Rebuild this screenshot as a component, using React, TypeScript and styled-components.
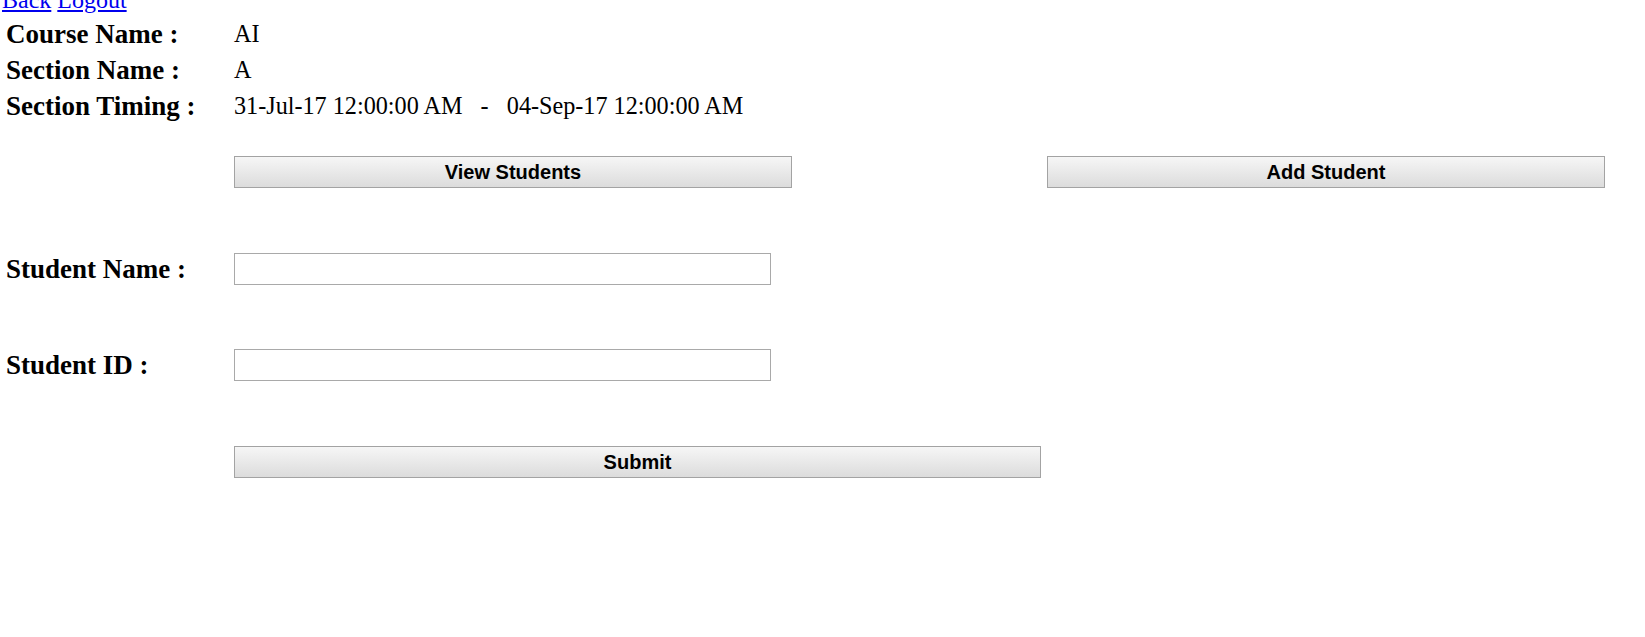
import React from "react";
import styled, { createGlobalStyle } from "styled-components";

const GlobalStyle = createGlobalStyle`
  html, body {
    margin: 0;
    padding: 0;
    background: #ffffff;
    overflow: hidden;
  }
  body {
    font-family: "Liberation Serif", "Times New Roman", serif;
    color: #000000;
  }
`;

const info = [
  { label: "Course Name :", value: "AI" },
  { label: "Section Name :", value: "A" },
  {
    label: "Section Timing :",
    value: "31-Jul-17 12:00:00 AM\u00a0\u00a0\u00a0-\u00a0\u00a0\u00a004-Sep-17 12:00:00 AM",
  },
];

const App: React.FC = () => {
  return (
    <Page>
      <GlobalStyle />
      <Nav>
        <NavLink href="#">Back</NavLink> <NavLink href="#">Logout</NavLink>
      </Nav>

      <InfoTable>
        {info.map((row) => (
          <InfoRow key={row.label}>
            <Label>{row.label}</Label>
            <Value>{row.value}</Value>
          </InfoRow>
        ))}
      </InfoTable>

      <FormRow $top={32} $height={32}>
        <span />
        <ButtonPair>
          <Button $width={558}>View Students</Button>
          <Button $width={558}>Add Student</Button>
        </ButtonPair>
      </FormRow>

      <FormRow $top={65} $height={32}>
        <Label>Student Name :</Label>
        <Input type="text" />
      </FormRow>

      <FormRow $top={64} $height={32}>
        <Label>Student ID :</Label>
        <Input type="text" />
      </FormRow>

      <FormRow $top={65} $height={32}>
        <span />
        <Button $width={807}>Submit</Button>
      </FormRow>
    </Page>
  );
};

export default App;

const Page = styled.div`
  width: 100%;
  display: flex;
  flex-direction: column;
`;

const Nav = styled.div`
  margin-top: -14px;
  padding-left: 2px;
  height: 30px;
  font-size: 24px;
  line-height: 28px;
  white-space: pre;
`;

const NavLink = styled.a`
  color: #0000ee;
  text-decoration: underline;
`;

const InfoTable = styled.div`
  display: flex;
  flex-direction: column;
`;

const InfoRow = styled.div`
  display: grid;
  grid-template-columns: 228px 1fr;
  align-items: center;
  height: 36px;
  padding-left: 6px;
`;

const Label = styled.div`
  font-size: 27px;
  font-weight: bold;
  white-space: nowrap;
`;

const Value = styled.div`
  font-size: 24.2px;
  white-space: nowrap;
`;

const FormRow = styled.div<{ $top: number; $height: number }>`
  display: grid;
  grid-template-columns: 228px 1fr;
  align-items: center;
  margin-top: ${(p) => p.$top}px;
  height: ${(p) => p.$height}px;
  padding-left: 6px;
`;

const ButtonPair = styled.div`
  display: flex;
  gap: 255px;
`;

const Button = styled.button<{ $width: number }>`
  width: ${(p) => p.$width}px;
  height: 32px;
  padding: 0;
  border: 1px solid #a3a3a3;
  border-radius: 0;
  background: linear-gradient(#f6f6f6, #dcdcdc);
  font-family: "Liberation Sans", Arial, sans-serif;
  font-size: 20px;
  font-weight: bold;
  color: #000000;
  cursor: pointer;
`;

const Input = styled.input`
  box-sizing: border-box;
  width: 537px;
  height: 32px;
  padding: 0 4px;
  border: 1px solid #a9a9a9;
  border-radius: 0;
  font-size: 20px;
  outline: none;
`;
